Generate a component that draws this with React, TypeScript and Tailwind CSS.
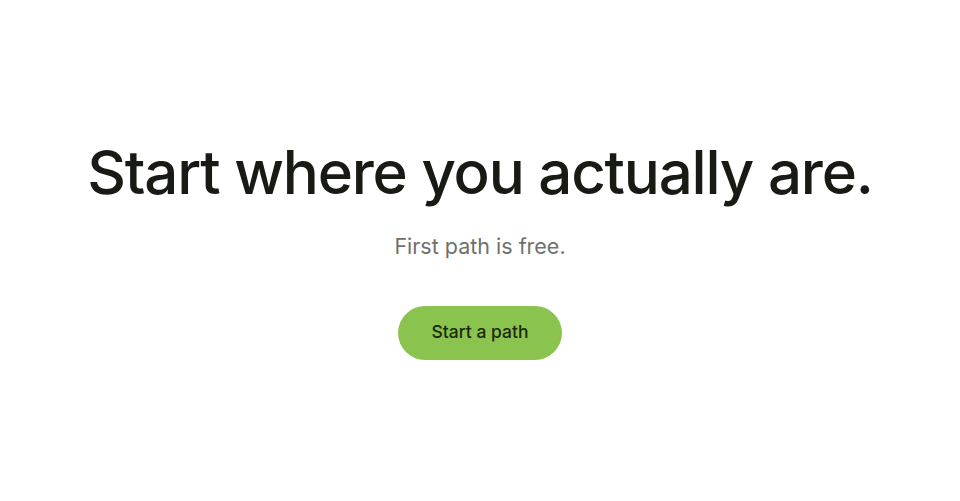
export default function App() {
  return (
    <div
      className="min-h-screen bg-white flex flex-col items-center justify-center"
      style={{ fontFamily: 'Inter, "Noto Sans", sans-serif' }}
    >
      <div className="flex flex-col items-center pt-[8px]">
        <h1 className="-mt-[14px] text-[60px] leading-[72px] font-medium tracking-[-0.02em] text-[#181a14]">
          Start where you actually are.
        </h1>
        <p className="mt-[24px] text-[21.5px] leading-[28px] text-[#6f716b]">First path is free.</p>
        <button className="mt-[46px] h-[54px] w-[164px] rounded-full bg-[#8bc34f] text-[17.5px] font-medium text-[#1b2a10]">
          Start a path
        </button>
      </div>
    </div>
  )
}
